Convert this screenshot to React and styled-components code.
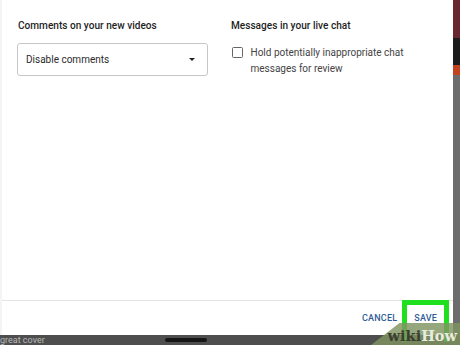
import React from "react";
import styled, { createGlobalStyle } from "styled-components";

const Global = createGlobalStyle`
  html, body { margin: 0; padding: 0; }
  body { width: 460px; height: 345px; overflow: hidden; background: #555; font-family: Roboto, "Liberation Sans", sans-serif; }
`;

const Page = styled.div`
  position: relative;
  width: 460px;
  height: 345px;
  display: flex;
  flex-direction: column;
  overflow: hidden;
`;

const TopRow = styled.div`
  display: flex;
  height: 335px;
`;

const Dialog = styled.div`
  width: 453px;
  height: 335px;
  background: #fff;
  display: flex;
  flex-direction: column;
  box-sizing: border-box;
  border-left: 2px solid #f4f4f4;
`;

const Body = styled.div`
  flex: 1;
  display: grid;
  grid-template-columns: 191px 1fr;
  column-gap: 22px;
  padding: 20px 18px 0 15px;
  align-content: start;
`;

const Column = styled.div`
  display: flex;
  flex-direction: column;
`;

const Title = styled.div`
  font-size: 10.1px;
  font-weight: 500;
  color: #1f1f1f;
  line-height: 12px;
  padding-left: 1px;
  margin-bottom: ${(p) => p.$gap}px;
`;

const Select = styled.div`
  height: 33px;
  box-sizing: border-box;
  border: 1px solid #c6c6c6;
  border-radius: 3px;
  display: flex;
  align-items: center;
  justify-content: space-between;
  padding: 0 12px 0 8px;
  font-size: 10px;
  color: #2a2a2a;
`;

const Caret = styled.span`
  width: 0;
  height: 0;
  border-left: 3.5px solid transparent;
  border-right: 3.5px solid transparent;
  border-top: 3.5px solid #222;
`;

const CheckRow = styled.label`
  display: flex;
  align-items: flex-start;
  gap: 8px;
  padding-left: 2px;
`;

const Box = styled.span`
  flex: none;
  width: 8.5px;
  height: 8.5px;
  border: 1.5px solid #666;
  border-radius: 1.5px;
  margin-top: 2px;
`;

const CheckText = styled.span`
  font-size: 10px;
  line-height: 16px;
  color: #444;
  margin-top: 0;
`;

const Footer = styled.div`
  height: 34px;
  border-top: 1px solid #e3e3e3;
  display: flex;
  justify-content: flex-end;
  align-items: center;
  gap: 17px;
  padding-right: 16px;
`;

const TextButton = styled.span`
  font-size: 9px;
  font-weight: 500;
  letter-spacing: 0.2px;
  color: #2f5d96;
`;

const SideStrip = styled.div`
  flex: 1;
  display: flex;
  flex-direction: column;
`;

const Seg = styled.div`
  height: ${(p) => p.$h}px;
  background: ${(p) => p.$c};
  flex: ${(p) => (p.$grow ? 1 : "none")};
`;

const BottomStrip = styled.div`
  flex: 1;
  background: #4e4e4e;
  display: flex;
  align-items: center;
  gap: 120px;
  font-size: 9px;
  color: #b8b8b8;
  line-height: 10px;
`;

const DarkBlob = styled.span`
  width: 42px;
  height: 4px;
  background: #151515;
  border-radius: 2px;
`;

const Highlight = styled.div`
  position: absolute;
  left: 402px;
  top: 300px;
  width: 47px;
  height: 42px;
  box-sizing: border-box;
  border: 5px solid #1fe01f;
  border-bottom: none;
`;

const Watermark = styled.div`
  position: absolute;
  right: 0;
  bottom: 0;
  width: 86px;
  height: 22px;
  background: rgba(128, 148, 96, 0.82);
  clip-path: polygon(32% 0, 100% 0, 100% 100%, 0 100%);
  display: flex;
  align-items: flex-end;
  justify-content: flex-end;
  padding-right: 3px;
  font-family: "DejaVu Serif", "Liberation Serif", serif;
  font-weight: bold;
  font-size: 14.5px;
  line-height: 18px;
`;

const Wiki = styled.span`
  color: #3a3f30;
`;
const How = styled.span`
  color: #e8ecdf;
`;

export default function App() {
  return (
    <>
      <Global />
      <Page>
        <TopRow>
          <Dialog>
            <Body>
              <Column>
                <Title $gap={11}>Comments on your new videos</Title>
                <Select>
                  <span>Disable comments</span>
                  <Caret />
                </Select>
              </Column>
              <Column>
                <Title $gap={13}>Messages in your live chat</Title>
                <CheckRow>
                  <Box />
                  <CheckText>
                    Hold potentially inappropriate chat
                    <br />
                    messages for review
                  </CheckText>
                </CheckRow>
              </Column>
            </Body>
            <Footer>
              <TextButton>CANCEL</TextButton>
              <TextButton>SAVE</TextButton>
            </Footer>
          </Dialog>
          <SideStrip>
            <Seg $h={38} $c="#6b2730" />
            <Seg $h={27} $c="#1c1c1c" />
            <Seg $h={10} $c="#c2441e" />
            <Seg $grow $c="#6c6c6c" />
          </SideStrip>
        </TopRow>
        <BottomStrip>
          <span>great cover</span>
          <DarkBlob />
        </BottomStrip>
        <Highlight />
        <Watermark>
          <Wiki>wiki</Wiki>
          <How>How</How>
        </Watermark>
      </Page>
    </>
  );
}
